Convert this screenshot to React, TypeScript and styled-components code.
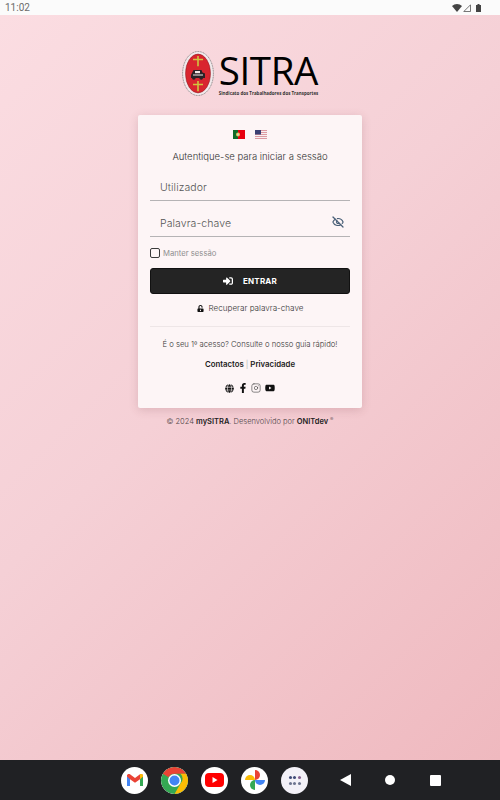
import styled, { createGlobalStyle } from "styled-components";
import { FaSignInAlt, FaUnlockAlt, FaGlobe, FaFacebookF, FaYoutube } from "react-icons/fa";
import { LuEyeOff, LuInstagram } from "react-icons/lu";

const GlobalStyle = createGlobalStyle`
  html, body { margin: 0; padding: 0; }
  body { font-family: "Inter", "Noto Sans", sans-serif; }
  * { box-sizing: border-box; }
`;

const Screen = styled.div`
  width: 500px;
  height: 800px;
  display: flex;
  flex-direction: column;
  overflow: hidden;
`;

const StatusBar = styled.div`
  height: 15px;
  flex: none;
  background: #fbfbfb;
  display: flex;
  align-items: center;
  justify-content: space-between;
  padding: 0 19px 0 5px;
  color: #6b6b6b;
  font-family: "Roboto", sans-serif;
  font-size: 10px;
`;

const StatusIcons = styled.div`
  display: flex;
  align-items: center;
  gap: 1px;
`;

const Main = styled.main`
  flex: 1;
  display: flex;
  flex-direction: column;
  align-items: center;
  padding-top: 36px;
  background: linear-gradient(135deg, #fbdde2 0%, #f5d0d6 45%, #efb9bf 100%);
`;

const Logo = styled.div`
  height: 47px;
  display: flex;
  align-items: flex-start;
  gap: 5px;
  margin-bottom: 17px;
`;

const LogoWords = styled.div`
  display: flex;
  flex-direction: column;
`;

const LogoName = styled.div`
  font-family: "Open Sans", sans-serif;
  font-size: 38.500px;
  line-height: 38px;
  letter-spacing: -0.4px;
  color: #000;
`;

const LogoTag = styled.div`
  font-family: "Open Sans", sans-serif;
  font-size: 4.450px;
  font-weight: 700;
  line-height: 6px;
  margin-top: 1px;
  color: #333;
  white-space: nowrap;
`;

const Card = styled.section`
  width: 224px;
  height: 293px;
  background: #fdf5f6;
  border-radius: 2px;
  box-shadow: 0 2px 10px rgba(120, 60, 70, 0.2);
  padding: 15px 12px 0;
  display: flex;
  flex-direction: column;
`;

const Flags = styled.div`
  display: flex;
  justify-content: center;
  gap: 10px;
  height: 10px;
`;

const Lead = styled.p`
  margin: 10px 0 0;
  text-align: center;
  font-size: 9.500px;
  font-weight: 300;
  line-height: 14px;
  color: #333;
`;

const Field = styled.div`
  height: 36px;
  border-bottom: 1px solid #b5b3b5;
  display: flex;
  align-items: flex-end;
  justify-content: space-between;
  padding: 0 6px 5px 10px;
  line-height: 14px;
  color: #555;
  font-size: 10.500px;
  font-weight: 300;
  letter-spacing: 0.1px;
`;

const FirstField = styled(Field)`
  height: 37px;
`;

const EyeIcon = styled(LuEyeOff)`
  margin-bottom: 3px;
`;

const RememberRow = styled.label`
  display: flex;
  align-items: center;
  gap: 3px;
  margin-top: 9px;
  height: 14px;
  font-size: 7.700px;
  color: #8f8f8f;
`;

const CheckBox = styled.span`
  width: 10px;
  height: 10px;
  border: 1px solid #3a3a3a;
  border-radius: 2px;
`;

const EnterButton = styled.button`
  margin-top: 8px;
  height: 26px;
  width: 100%;
  flex: none;
  border: 1px solid #111;
  border-radius: 3px;
  background: #242424;
  color: #fff;
  font-family: inherit;
  font-size: 8px;
  font-weight: 700;
  letter-spacing: 0.2px;
  display: flex;
  align-items: center;
  justify-content: center;
  gap: 10px;
`;

const Recover = styled.div`
  margin-top: 7px;
  height: 14px;
  display: flex;
  align-items: center;
  justify-content: center;
  gap: 5px;
  font-size: 8.100px;
  font-weight: 300;
  color: #333;
`;

const Divider = styled.hr`
  width: 100%;
  margin: 11px 0 0;
  border: 0;
  border-top: 1px solid #eee6e7;
`;

const Guide = styled.p`
  margin: 13px 0 0;
  text-align: center;
  font-size: 7.700px;
  font-weight: 300;
  line-height: 10px;
  color: #333;
  white-space: nowrap;
`;

const Links = styled.div`
  margin-top: 9px;
  text-align: center;
  font-size: 7.800px;
  line-height: 10px;
  font-weight: 600;
  color: #1c1c1c;
`;

const Sep = styled.span`
  color: #bbb;
  font-weight: 400;
  margin: 0 2px;
`;

const Socials = styled.div`
  margin-top: 14px;
  display: flex;
  justify-content: center;
  align-items: center;
  gap: 3.500px;
  color: #111;
  height: 10px;
`;

const Copyright = styled.p`
  margin: 9px 0 0;
  font-size: 7.500px;
  font-weight: 300;
  line-height: 10px;
  color: #4e4448;
`;

const Strong = styled.span`
  font-weight: 600;
  color: #222;
`;

const Mark = styled.sup`
  font-size: 5px;
  line-height: 0;
  margin-left: 2px;
`;

const NavBar = styled.nav`
  height: 40px;
  flex: none;
  background: #202124;
  display: flex;
  align-items: center;
  padding-left: 121px;
`;

const Dock = styled.div`
  display: flex;
  gap: 13px;
`;

const AppIcon = styled.div<{ $bg?: string }>`
  width: 27px;
  height: 27px;
  border-radius: 50%;
  background: ${(p) => p.$bg || "#fff"};
  display: flex;
  align-items: center;
  justify-content: center;
  overflow: hidden;
`;

const NavKeys = styled.div`
  display: flex;
  align-items: center;
  margin-left: 32px;
  gap: 34px;
`;

const BackKey = styled.span`
  width: 0;
  height: 0;
  border-top: 6px solid transparent;
  border-bottom: 6px solid transparent;
  border-right: 11px solid #fff;
`;

const HomeKey = styled.span`
  width: 10px;
  height: 10px;
  border-radius: 50%;
  background: #fff;
`;

const RecentKey = styled.span`
  width: 11px;
  height: 11px;
  margin-left: 1px;
  border-radius: 1px;
  background: #fff;
`;

const Dots = styled.div`
  display: grid;
  grid-template-columns: repeat(3, 3px);
  column-gap: 1.500px;
  row-gap: 3px;
`;

const Dot = styled.span<{ $c: string }>`
  width: 3px;
  height: 3px;
  border-radius: 50%;
  background: ${(p) => p.$c};
`;

const BatteryShape = styled.svg`
  margin-left: 4px;
`;

function Crest() {
  return (
    <svg width="32" height="45" viewBox="0 0 32 45">
      <ellipse cx="16" cy="22.500" rx="15.400" ry="22" fill="#f1eaec" stroke="#777" strokeWidth="0.900" strokeDasharray="1 0.700" />
      <ellipse cx="16" cy="22.500" rx="12.500" ry="19.500" fill="#d9252f" stroke="#8a1b22" strokeWidth="0.500" />
      <path d="M15.200 5h1.600v2.800h4.200v1.400h-4.200v6h-1.600v-6H11V7.800h4.200z" fill="#cfc63f" />
      <path d="M15.200 30h1.600v2.800h4.200v1.400h-4.200v6h-1.600v-6H11v-1.400h4.200z" fill="#cfc63f" />
      <path d="M9 24l2.500-5h8l1 2.500 2.500 1V27h-2a1.800 1.800 0 0 1-3.600 0h-3.800a1.800 1.800 0 0 1-3.600 0H9z" fill="#2a2226" />
      <rect x="13" y="20" width="5" height="2.200" fill="#f2e5e5" />
      <rect x="11" y="23.500" width="10" height="1" fill="#f2e5e5" />
    </svg>
  );
}

function FlagPt() {
  return (
    <svg width="12" height="9" viewBox="0 0 12 9">
      <rect width="12" height="9" fill="#e8000f" />
      <rect width="5" height="9" fill="#0f6b28" />
      <circle cx="5" cy="4.500" r="2" fill="#e3c64a" />
      <rect x="4.200" y="3.500" width="1.600" height="2" fill="#c9d2d8" />
    </svg>
  );
}

function FlagUs() {
  const rows = [0, 2, 4, 6, 8];
  return (
    <svg width="12" height="9" viewBox="0 0 12 9">
      <rect width="12" height="9" fill="#f7f0f1" />
      {rows.map((y) => (
        <rect key={y} y={y} width="12" height="1" fill="#dd9aa2" />
      ))}
      <rect width="6" height="4.500" fill="#3b3f72" />
    </svg>
  );
}

function Gmail() {
  return (
    <svg width="18" height="14" viewBox="0 0 18 14">
      <path d="M1 13V3l3 2v8z" fill="#4285f4" />
      <path d="M14 13V5l3-2v10z" fill="#34a853" />
      <path d="M1 3.500V2.500C1 1 2.800 0.400 4 1.300L9 5l5-3.700c1.200-.9 3-.3 3 1.200v1L14 6.200 9 9.800 4 6.200z" fill="#ea4335" />
      <path d="M14 1.300c1.200-.9 3-.3 3 1.200v1L14 6.200z" fill="#fbbc04" />
    </svg>
  );
}

function Chrome() {
  return (
    <svg width="27" height="27" viewBox="0 0 27 27">
      <circle cx="13.500" cy="13.500" r="13.500" fill="#34a853" />
      <path d="M13.500 0A13.500 13.500 0 0 1 25.200 6.750H13.500A6.750 6.750 0 0 0 7.600 10.200L1.800 6.750A13.500 13.500 0 0 1 13.500 0z" fill="#ea4335" />
      <path d="M25.200 6.750A13.500 13.500 0 0 1 13.500 27l5.900-10.200a6.750 6.750 0 0 0 0-10z" fill="#fbbc04" />
      <circle cx="13.500" cy="13.500" r="6.500" fill="#fff" />
      <circle cx="13.500" cy="13.500" r="5" fill="#4285f4" />
    </svg>
  );
}

function Youtube() {
  return (
    <svg width="19" height="14" viewBox="0 0 19 14">
      <rect width="19" height="14" rx="4" fill="#f00" />
      <path d="M7.500 4l5 3-5 3z" fill="#fff" />
    </svg>
  );
}

function Photos() {
  return (
    <svg width="20" height="20" viewBox="0 0 20 20">
      <path d="M0 10A5 5 0 0 1 10 10z" fill="#fbbc04" />
      <path d="M10 0A5 5 0 0 1 10 10z" fill="#ea4335" />
      <path d="M20 10A5 5 0 0 1 10 10z" fill="#4285f4" />
      <path d="M10 20A5 5 0 0 1 10 10z" fill="#34a853" />
    </svg>
  );
}

function Wifi() {
  return (
    <svg width="10" height="8" viewBox="0 0 10 8">
      <path d="M0 2a7.500 7.500 0 0 1 10 0L5 8z" fill="#444" />
    </svg>
  );
}

function Signal() {
  return (
    <svg width="8" height="8" viewBox="0 0 8 8">
      <path d="M7.500 .8v6.700H.8z" fill="none" stroke="#555" strokeWidth="0.800" />
    </svg>
  );
}

function Battery() {
  return (
    <BatteryShape width="5" height="8" viewBox="0 0 5 8">
      <path d="M1.500 0h2v1H5v7H0V1h1.500z" fill="#444" />
    </BatteryShape>
  );
}

const dotColors = ["#3f4a78", "#3f4a78", "#86608f", "#6d7590", "#6d7590", "#6d7590"];

export default function App() {
  return (
    <>
      <GlobalStyle />
      <Screen>
        <StatusBar>
          <span>11:02</span>
          <StatusIcons>
            <Wifi />
            <Signal />
            <Battery />
          </StatusIcons>
        </StatusBar>
        <Main>
          <Logo>
            <Crest />
            <LogoWords>
              <LogoName>SITRA</LogoName>
              <LogoTag>Sindicato dos Trabalhadores dos Transportes</LogoTag>
            </LogoWords>
          </Logo>
          <Card>
            <Flags>
              <FlagPt />
              <FlagUs />
            </Flags>
            <Lead>Autentique-se para iniciar a sessão</Lead>
            <FirstField>Utilizador</FirstField>
            <Field>
              Palavra-chave
              <EyeIcon size={12} color="#4a6078" strokeWidth={2.4} />
            </Field>
            <RememberRow>
              <CheckBox />
              Manter sessão
            </RememberRow>
            <EnterButton>
              <FaSignInAlt size={10} />
              ENTRAR
            </EnterButton>
            <Recover>
              <FaUnlockAlt size={7} color="#111" />
              Recuperar palavra-chave
            </Recover>
            <Divider />
            <Guide>É o seu 1º acesso? Consulte o nosso guia rápido!</Guide>
            <Links>
              Contactos<Sep>|</Sep>Privacidade
            </Links>
            <Socials>
              <FaGlobe size={9} />
              <FaFacebookF size={10} />
              <LuInstagram size={10} strokeWidth={1.500} color="#444" />
              <FaYoutube size={10} />
            </Socials>
          </Card>
          <Copyright>
            © 2024 <Strong>mySITRA</Strong>. Desenvolvido por <Strong>ONITdev</Strong>
            <Mark>®</Mark>
          </Copyright>
        </Main>
        <NavBar>
          <Dock>
            <AppIcon>
              <Gmail />
            </AppIcon>
            <AppIcon>
              <Chrome />
            </AppIcon>
            <AppIcon>
              <Youtube />
            </AppIcon>
            <AppIcon>
              <Photos />
            </AppIcon>
            <AppIcon $bg="#f3f1f8">
              <Dots>
                {dotColors.map((c, i) => (
                  <Dot key={i} $c={c} />
                ))}
              </Dots>
            </AppIcon>
          </Dock>
          <NavKeys>
            <BackKey />
            <HomeKey />
            <RecentKey />
          </NavKeys>
        </NavBar>
      </Screen>
    </>
  );
}
